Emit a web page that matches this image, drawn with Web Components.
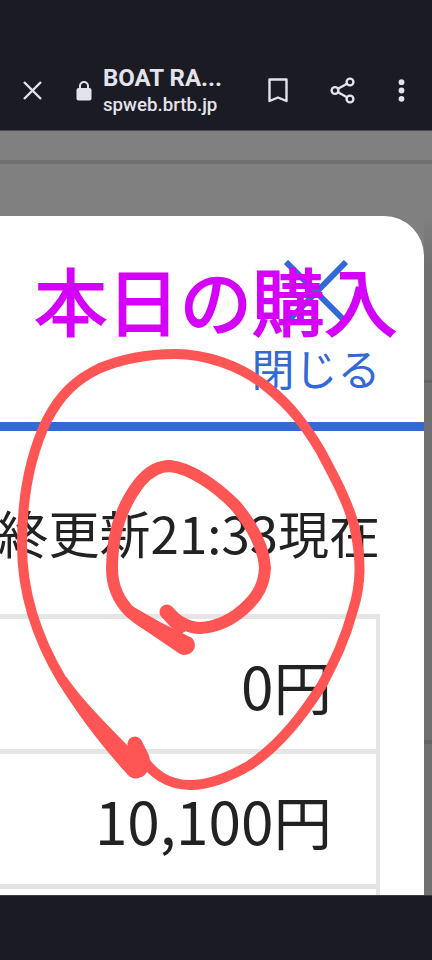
<!DOCTYPE html>
<html lang="ja">
<head>
<meta charset="utf-8">
<title>本日の購入</title>
<style>
    html, body { margin: 0; height: 100%; overflow: hidden; }
    body { font-family: "Noto Sans CJK JP", "Noto Sans", sans-serif; }
</style>
</head>
<body>
<browser-screen>
    <browser-bar slot="top" title-text="BOAT RA..." host-text="spweb.brtb.jp"></browser-bar>
    <modal-panel heading="本日の購入" close-label="閉じる">
        <update-note>最終更新21:33現在</update-note>
        <amount-table>
            <amount-row>0円</amount-row>
            <amount-row>10,100円</amount-row>
            <amount-row></amount-row>
        </amount-table>
    </modal-panel>
    <ink-marks slot="over"></ink-marks>
</browser-screen>

<template id="browser-screen">
    <style>
        :host {
            display: flex;
            flex-direction: column;
            position: relative;
            width: 432px;
            height: 960px;
            overflow: hidden;
            background: #1b1b24;
        }
        .page {
            flex: 1;
            min-height: 0;
            overflow: hidden;
            display: flex;
            flex-direction: column;
            align-items: flex-end;
            background: #808080;
        }
        .band {
            align-self: stretch;
            flex: none;
            height: 4px;
            margin: 29px 0 52px;
            background: #707070;
        }
        .strip {
            position: absolute;
            top: 216px;
            right: 0;
            width: 8px;
            height: 679px;
            background:
                linear-gradient(#646464, #646464) 0 164px / 100% 3px no-repeat,
                linear-gradient(#646464, #646464) 0 524px / 100% 4px no-repeat,
                linear-gradient(#808080, #707070 50px);
        }
        .foot {
            flex: none;
            height: 65px;
            box-sizing: border-box;
            border-top: 1px solid #3a3a44;
            background: #1b1b24;
        }
    </style>
    <slot name="top"></slot>
    <div class="page">
        <div class="band"></div>
        <slot></slot>
    </div>
    <div class="strip"></div>
    <div class="foot"></div>
    <slot name="over"></slot>
</template>

<template id="browser-bar">
    <style>
        :host {
            display: flex;
            flex: none;
            align-items: center;
            box-sizing: border-box;
            height: 131px;
            padding: 50px 0 0 22px;
            background: #1b1b24;
            border-bottom: 1px solid #4b4b56;
            color: #e3e3ec;
            font-family: Roboto, "Liberation Sans", sans-serif;
        }
        svg { display: block; flex: none; }
        .close { margin-right: 33px; }
        .lock { margin-right: 11px; }
        .text { width: 165px; flex: none; }
        .title { font-size: 24px; line-height: 30px; font-weight: 700; white-space: nowrap; }
        .host { font-size: 18.7px; line-height: 24px; font-weight: 500; white-space: nowrap; }
        .mark { margin-right: 42px; }
        .share { margin-right: 43px; }
    </style>
    <svg class="close" width="21" height="21" viewBox="0 0 21 21" fill="none" stroke="currentColor" stroke-width="2.4"><path d="M2 2 19 19M19 2 2 19"/></svg>
    <svg class="lock" width="16" height="21" viewBox="0 0 16 21"><path fill="none" stroke="currentColor" stroke-width="2" d="M4 9V6a4 4 0 0 1 8 0v3"/><rect x="0.5" y="8" width="15" height="12.5" rx="2" fill="currentColor"/></svg>
    <div class="text">
        <div class="title" id="title"></div>
        <div class="host" id="host"></div>
    </div>
    <svg class="mark" width="20" height="25" viewBox="0 0 20 25" fill="none" stroke="currentColor" stroke-width="2.4" stroke-linejoin="round"><path d="M1.5 1.5H18.5V23L10 19.5 1.5 23Z"/></svg>
    <svg class="share" width="25" height="27" viewBox="0 0 25 27" fill="none" stroke="currentColor" stroke-width="2.4"><circle cx="20" cy="5" r="3.4"/><circle cx="20" cy="22" r="3.4"/><circle cx="5" cy="13.5" r="3.4"/><path d="M8 11.8 17 6.7M8 15.2 17 20.3"/></svg>
    <svg width="7" height="23" viewBox="0 0 7 23" fill="currentColor"><circle cx="3.5" cy="3.2" r="2.9"/><circle cx="3.5" cy="11.5" r="2.9"/><circle cx="3.5" cy="19.8" r="2.9"/></svg>
</template>

<template id="modal-panel">
    <style>
        :host {
            display: block;
            flex: none;
            width: 520px;
            height: 760px;
            margin-right: 8px;
            background: #fff;
            border-radius: 40px 40px 0 0;
            color: #222;
        }
        header {
            position: relative;
            display: flex;
            justify-content: flex-end;
            box-sizing: border-box;
            height: 215px;
            padding: 46px 27px 0 0;
            border-bottom: 9px solid #3369d6;
        }
        h1 {
            position: relative;
            margin: 0;
            font-size: 72.5px;
            line-height: 73px;
            font-weight: 400;
            -webkit-text-stroke: 2px #d500f9;
            color: #d500f9;
            white-space: nowrap;
        }
        .close {
            position: absolute;
            top: 44px;
            right: 44px;
            width: 128px;
            display: flex;
            flex-direction: column;
            align-items: center;
            color: #3369d6;
            font-size: 43px;
            line-height: 44px;
        }
        .close svg { display: block; margin-bottom: 23px; }
        .close span { white-space: nowrap; }
    </style>
    <header>
        <div class="close">
            <svg width="66" height="62" viewBox="0 0 66 62" fill="none" stroke="#3369d6" stroke-width="6"><path d="M3 2 61 60M63 2 6 60"/></svg>
            <span id="label"></span>
        </div>
        <h1 id="heading"></h1>
    </header>
    <slot></slot>
</template>

<template id="update-note">
    <style>
        :host {
            display: block;
            box-sizing: border-box;
            height: 183px;
            padding: 71px 44px 0 0;
            text-align: right;
            font-size: 51px;
            line-height: 60px;
            white-space: nowrap;
        }
    </style>
    <slot></slot>
</template>

<template id="amount-table">
    <style>
        :host {
            display: block;
            margin-right: 44px;
            border-top: 5px solid #e5e5e5;
            border-right: 4px solid #e5e5e5;
        }
    </style>
    <slot></slot>
</template>

<template id="amount-row">
    <style>
        :host {
            display: flex;
            justify-content: flex-end;
            align-items: center;
            box-sizing: border-box;
            height: 135px;
            padding: 2px 44px 0 0;
            border-bottom: 5px solid #e5e5e5;
            font-size: 58.5px;
            line-height: 70px;
            white-space: nowrap;
        }
    </style>
    <slot></slot>
</template>

<template id="ink-marks">
    <style>
        :host { position: absolute; inset: 0; display: block; pointer-events: none; }
        svg { display: block; }
    </style>
    <svg width="432" height="960" viewBox="0 0 432 960" fill="none" stroke="#ff5555" stroke-linecap="round" stroke-linejoin="round">
        <path stroke-width="10" d="M62 680C35 635 22 590 22 545C22 500 30 455 47 420C60 395 75 380 100 368C125 358 150 354 175 354C205 354 240 365 267 387C290 405 305 425 320 450C335 478 347 500 354 525C362 560 361 585 353 610C345 640 335 660 322 685C305 712 280 745 250 765C228 778 208 785 190 785C170 785 150 775 138 750"/>
        <!-- tail of the outer loop gets thicker where the pen slowed down -->
        <path stroke="none" fill="#ff5555" d="M57.5 682L66.5 677C82 700 105 722 127 745L148 765C150 778 133 782 128 775C105 750 80 718 57.5 682Z"/>
        <path stroke-width="15" d="M135 744 142 758"/>
        <path stroke-width="12" d="M186 647C165 635 145 625 130 612C118 600 112 585 112 568C112 535 122 505 140 482C150 470 160 466 170 466C190 468 215 485 235 505C252 525 264 548 265 568C264 585 258 595 248 605C235 618 218 627 200 628C188 628 178 622 167 612"/>
        <path stroke="none" fill="#ff5555" d="M125 602L160 622 192 638C200 648 190 658 180 654L133 622Z"/>
        <path stroke-width="15" d="M167 612 180 626"/>
    </svg>
</template>

<script>
    // every element clones the template that has its own tag name
    class BaseElement extends HTMLElement {
        constructor() {
            super();
            const template = document.getElementById(this.localName);
            this.attachShadow({mode: 'open'}).appendChild(template.content.cloneNode(true));
        }
    }

    class BrowserBar extends BaseElement {
        connectedCallback() {
            this.shadowRoot.querySelector('#title').textContent = this.getAttribute('title-text');
            this.shadowRoot.querySelector('#host').textContent = this.getAttribute('host-text');
        }
    }

    class ModalPanel extends BaseElement {
        connectedCallback() {
            this.shadowRoot.querySelector('#heading').textContent = this.getAttribute('heading');
            this.shadowRoot.querySelector('#label').textContent = this.getAttribute('close-label');
        }
    }

    customElements.define('browser-screen', class extends BaseElement {});
    customElements.define('browser-bar', BrowserBar);
    customElements.define('modal-panel', ModalPanel);
    customElements.define('update-note', class extends BaseElement {});
    customElements.define('amount-table', class extends BaseElement {});
    customElements.define('amount-row', class extends BaseElement {});
    customElements.define('ink-marks', class extends BaseElement {});
</script>
</body>
</html>
